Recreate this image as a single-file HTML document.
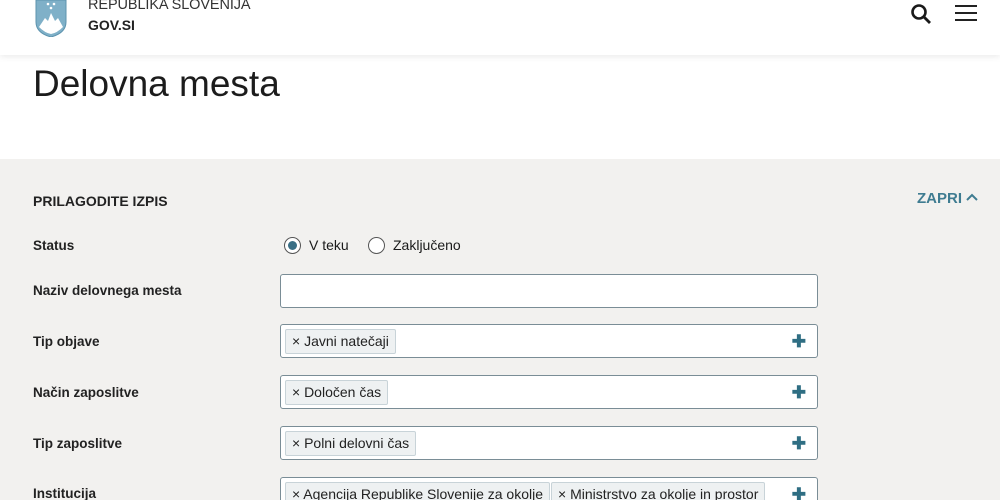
<!DOCTYPE html>
<html><head><meta charset="utf-8"><style>
*{margin:0;padding:0;box-sizing:border-box}
html,body{width:1000px;height:500px;overflow:hidden}
body{background:#fff;font-family:"Liberation Sans",sans-serif;color:#1a1a1a;position:relative}
.hdr{position:absolute;left:0;top:0;width:1000px;height:55px;background:#fff;box-shadow:0 2px 6px rgba(0,0,0,.08);z-index:2}
.t1{position:absolute;left:88px;top:-3px;font-size:14.5px;color:#333;letter-spacing:-.1px}
.t2{position:absolute;left:88px;top:17px;font-size:14px;font-weight:bold;color:#222}
h1{position:absolute;left:33px;top:63px;font-size:37px;font-weight:normal;color:#1c1c1c}
.gray{position:absolute;left:0;top:159px;width:1000px;height:341px;background:#f2f1ef;overflow:hidden}
.lbl{position:absolute;left:33px;font-size:13.5px;font-weight:bold;color:#222}
.box{position:absolute;left:280px;width:538px;height:34px;background:#fff;border:1px solid #7a8d96;border-radius:3px}
.tag{position:absolute;top:4px;height:25px;background:#eef1f2;border:1px solid #c8d3d8;border-radius:2px;font-size:14px;color:#222;padding:3px 6px 0 6px;white-space:nowrap}
.plus{position:absolute;right:11px;top:7px;color:#2f6e83;font-size:17px;font-weight:bold}
</style></head><body>
<div class="hdr">
<svg style="position:absolute;left:35px;top:0" width="32" height="37" viewBox="0 0 32 37"><path d="M1 0 V22 Q1 33 16 37 Q31 33 31 22 V0Z" fill="#7fb0c8" stroke="#5d93ae"/><path d="M4 27 L10 18 L13 21 L16 13 L20 21 L23 18 L28 27 Q22 33 16 34 Q10 33 4 27Z" fill="#fff"/><circle cx="13" cy="4" r="1.3" fill="#fff"/><circle cx="19" cy="4" r="1.3" fill="#fff"/><circle cx="16" cy="8" r="1.3" fill="#fff"/></svg>
<div class="t1">REPUBLIKA SLOVENIJA</div>
<div class="t2">GOV.SI</div>
<svg style="position:absolute;left:910px;top:3px" width="23" height="22" viewBox="0 0 23 22"><circle cx="9" cy="9" r="6.5" fill="none" stroke="#1a1a1a" stroke-width="2.6"/><line x1="13.5" y1="13.5" x2="20" y2="20" stroke="#1a1a1a" stroke-width="2.8"/></svg>
<div style="position:absolute;left:955px;top:5px;width:22px;height:2px;background:#222"></div>
<div style="position:absolute;left:955px;top:12px;width:22px;height:2px;background:#222"></div>
<div style="position:absolute;left:955px;top:19px;width:22px;height:2px;background:#222"></div>
</div>
<h1>Delovna mesta</h1>
<div class="gray">
<div class="lbl" style="top:34px;font-size:14px">PRILAGODITE IZPIS</div>
<div style="position:absolute;left:917px;top:31px;font-size:15px;font-weight:bold;color:#3f7c91">ZAPRI <svg width="12" height="10" viewBox="0 0 12 10"><path d="M1 7 L6 2 L11 7" fill="none" stroke="#3f7c91" stroke-width="2"/></svg></div>
<div class="lbl" style="top:79px">Status</div>
<div style="position:absolute;left:284px;top:78px;width:17px;height:17px;border:1px solid #555;border-radius:50%;background:#fff"><div style="position:absolute;left:3px;top:3px;width:9px;height:9px;border-radius:50%;background:#3a6f85"></div></div>
<div style="position:absolute;left:309px;top:78px;font-size:14px">V teku</div>
<div style="position:absolute;left:368px;top:78px;width:17px;height:17px;border:1px solid #555;border-radius:50%;background:#fff"></div>
<div style="position:absolute;left:393px;top:78px;font-size:14px">Zaključeno</div>
<div class="lbl" style="top:124px">Naziv delovnega mesta</div>
<div class="box" style="top:115px"></div>
<div class="lbl" style="top:175px">Tip objave</div>
<div class="box" style="top:165px"><div class="tag" style="left:4px">× Javni natečaji</div><div class="plus">✚</div></div>
<div class="lbl" style="top:226px">Način zaposlitve</div>
<div class="box" style="top:216px"><div class="tag" style="left:4px">× Določen čas</div><div class="plus">✚</div></div>
<div class="lbl" style="top:277px">Tip zaposlitve</div>
<div class="box" style="top:267px"><div class="tag" style="left:4px">× Polni delovni čas</div><div class="plus">✚</div></div>
<div class="lbl" style="top:327px">Institucija</div>
<div class="box" style="top:318px"><div class="tag" style="left:4px">× Agencija Republike Slovenije za okolje</div><div class="tag" style="left:270px">× Ministrstvo za okolje in prostor</div><div class="plus">✚</div></div>
</div>
</body></html>
